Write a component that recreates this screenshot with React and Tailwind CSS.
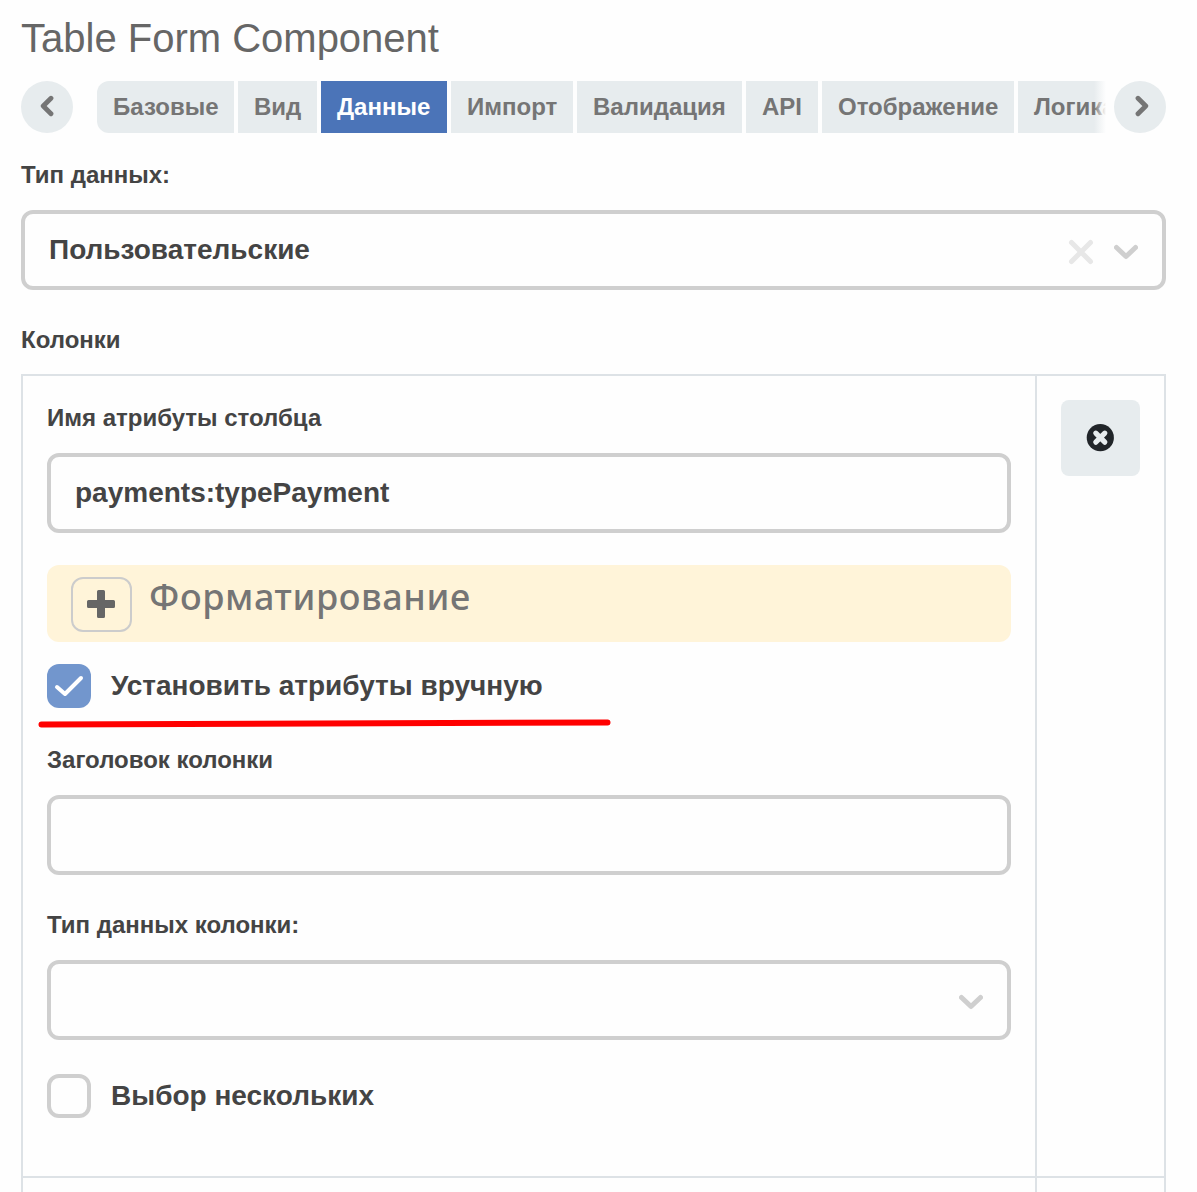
const TABS = [
  { label: "Базовые", size: "w-[137px] rounded-l-xl" },
  { label: "Вид", size: "w-[79px]" },
  { label: "Данные", size: "w-[126px]", active: true },
  { label: "Импорт", size: "w-[122px]" },
  { label: "Валидация", size: "w-[165px]" },
  { label: "API", size: "w-[72px]" },
  { label: "Отображение", size: "w-[192px]" },
  { label: "Логика", size: "w-[119px]" },
];

function Glyph({ w, h, d, width, className }) {
  return (
    <svg width={w} height={h} viewBox={`0 0 ${w} ${h}`} fill="none" stroke="currentColor" strokeWidth={width} strokeLinecap="round" strokeLinejoin="round" className={className}>
      <path d={d} />
    </svg>
  );
}

function ChevronDown() {
  return <Glyph w={24} h={16} d="M2.5 3.5L12 12.500L21.5 3.5" width={5} className="text-[#cfcfcf]" />;
}

function Label({ children, className = "" }) {
  return <div className={`h-8 whitespace-nowrap text-2xl/8 font-bold ${className}`}>{children}</div>;
}

function Field({ children, className = "" }) {
  return (
    <div className={`flex h-20 items-center rounded-xl border-4 border-[#cfcfcf] px-6 text-[28px]/[36px] font-bold ${className}`}>
      {children}
    </div>
  );
}

function Tabs() {
  return (
    <div className="mt-[17px] flex h-[52px] text-[#757575]">
      <button className="flex size-[52px] shrink-0 items-center justify-center rounded-full bg-[#e7ecee]">
        <Glyph w={14} h={22} d="M11 3.200L3.200 11L11 18.800" width={4.8} className="-mt-0.5" />
      </button>
      <div className="relative ml-6 flex w-[1009px] shrink-0 gap-1 overflow-hidden">
        {TABS.map((t) => (
          <button
            key={t.label}
            className={`h-full shrink-0 whitespace-nowrap px-4 text-left text-2xl font-bold ${t.size} ${t.active ? "bg-[#4b74b8] text-white" : "bg-[#e7ecee]"}`}
          >
            {t.label}
          </button>
        ))}
        <div className="absolute inset-y-0 right-0 w-3 bg-linear-to-r from-[#fefefe]/0 to-[#fefefe]" />
      </div>
      <button className="ml-2 flex size-[52px] shrink-0 items-center justify-center rounded-full bg-[#e7ecee]">
        <Glyph w={14} h={22} d="M3 3.200L10.800 11L3 18.800" width={4.8} className="-mt-0.5 ml-1" />
      </button>
    </div>
  );
}

export default function App() {
  return (
    <main className="h-[1192px] w-[1197px] overflow-hidden bg-[#fefefe] pl-[21px] pr-[31px] pt-[15px] font-['Liberation_Sans',Arial,sans-serif] text-[#444]">
      <h1 className="mb-[18px] h-12 whitespace-nowrap text-[40px]/[46px] text-[#666]">Table Form Component</h1>
      <Tabs />

      <Label className="mt-[26px]">Тип данных:</Label>
      <Field className="mt-[19px]">
        <span className="grow">Пользовательские</span>
        <Glyph w={26} h={26} d="M3.5 3.5L22.5 22.5M22.5 3.5L3.5 22.5" width={5} className="mr-5 mt-[3px] text-[#e7e7e7]" />
        <span className="mt-1">
          <ChevronDown />
        </span>
      </Field>

      <Label className="mt-[34px]">Колонки</Label>
      <section className="mt-[18px] flex h-[804px] border-2 border-[#dde2e6]">
        <div className="w-[1014px] shrink-0 border-r-2 border-[#dde2e6] px-6 pt-[26px]">
          <Label>Имя атрибуты столбца</Label>
          <Field className="mt-[19px]">payments:typePayment</Field>

          <div className="mt-8 flex h-[77px] items-start rounded-xl bg-[#fff4d9] pl-6 pt-3">
            <button className="flex h-[55px] w-[61px] items-center justify-center rounded-xl border-2 border-[#ccc] pb-0.5 pr-0.5 text-[#666]">
              <svg width="28" height="28" viewBox="0 0 28 28" fill="currentColor">
                <path d="M11.5 0h5Q18 0 18 1.5V10h8.500Q28 10 28 11.500v5Q28 18 26.500 18H18v8.500Q18 28 16.500 28h-5Q10 28 10 26.500V18H1.500Q0 18 0 16.500v-5Q0 10 1.500 10H10V1.500Q10 0 11.500 0Z" />
              </svg>
            </button>
            <span className="-mt-[5px] ml-[17px] whitespace-nowrap font-['Noto_Sans',sans-serif] text-[36px]/[49px] font-medium tracking-[0.6px] text-[#757575]">Форматирование</span>
          </div>

          <div className="relative mt-[22px] flex h-11 items-center">
            <span className="flex size-11 items-center justify-center rounded-xl bg-[#7296cd] text-white">
              <Glyph w={30} h={22} d="M3 12L11 19L27 3" width={4} />
            </span>
            <span className="ml-5 whitespace-nowrap text-[28px]/[36px] font-bold">Установить атрибуты вручную</span>
            <svg className="absolute -left-2.5 top-[52px] text-[#f00]" width="576" height="14" viewBox="0 0 576 14">
              <path d="M4.500 8.500L570.500 6.500" stroke="currentColor" strokeWidth="6" strokeLinecap="round" />
            </svg>
          </div>

          <Label className="mt-9">Заголовок колонки</Label>
          <Field className="mt-[19px]" />

          <Label className="mt-[34px]">Тип данных колонки:</Label>
          <Field className="mt-[19px] justify-end">
            <span className="mt-1">
              <ChevronDown />
            </span>
          </Field>

          <div className="mt-[34px] flex h-11 items-center">
            <span className="size-11 rounded-xl border-4 border-[#cfcfcf]" />
            <span className="ml-5 whitespace-nowrap text-[28px]/[36px] font-bold">Выбор нескольких</span>
          </div>
        </div>
        <div className="pl-6 pt-6">
          <button className="flex h-[76px] w-[79px] items-center justify-center rounded-lg bg-[#e7ecee]">
            <svg width="28" height="28" viewBox="0 0 28 28" className="-mt-px mr-px">
              <circle cx="14.300" cy="13.700" r="13.600" fill="#212529" />
              <path d="M9.800 9.200L18.800 18.200M18.800 9.200L9.800 18.200" stroke="#e7ecee" strokeWidth="5.200" strokeLinecap="round" />
            </svg>
          </button>
        </div>
      </section>
      <div className="flex h-4 border-x-2 border-[#dde2e6]">
        <div className="w-[1014px] border-r-2 border-[#dde2e6]" />
      </div>
    </main>
  );
}
